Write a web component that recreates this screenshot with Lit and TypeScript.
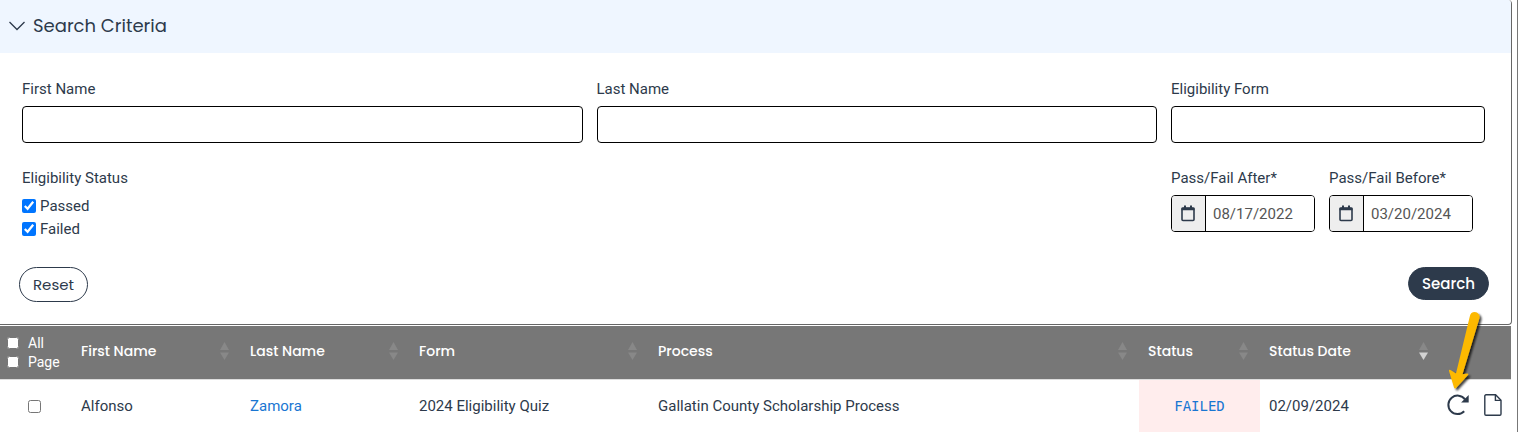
import { LitElement, html, css, svg, nothing } from "lit";
import { customElement, state } from "lit/decorators.js";

interface Column {
  label: string;
  cls: string;
  sorted?: boolean;
}

interface Applicant {
  first: string;
  last: string;
  form: string;
  process: string;
  status: string;
  date: string;
}

const COLUMNS: Column[] = [
  { label: "First Name", cls: "name" },
  { label: "Last Name", cls: "name" },
  { label: "Form", cls: "form" },
  { label: "Process", cls: "process" },
  { label: "Status", cls: "status" },
  { label: "Status Date", cls: "date", sorted: true },
];

const ROWS: Applicant[] = [
  {
    first: "Alfonso",
    last: "Zamora",
    form: "2024 Eligibility Quiz",
    process: "Gallatin County Scholarship Process",
    status: "FAILED",
    date: "02/09/2024",
  },
];

@customElement("app-root")
export class AppRoot extends LitElement {
  @state() private open = true;

  static styles = css`
    :host {
      display: block;
      background: #fff;
      color: #2d3a4b;
      font-family: Roboto, "Liberation Sans", sans-serif;
      font-size: 15px;
      line-height: 20px;
    }
    *, *::before, *::after { box-sizing: border-box; }
    button, input { font: inherit; color: inherit; }
    svg { display: block; }

    .frame {
      position: relative;
      margin-right: 9px;
      padding-right: 5px;
      border-right: 1px solid #777;
      min-height: 100vh;
    }
    .panel {
      border: 1px solid #666;
      border-width: 0 1px 1px 0;
      border-radius: 0 4px 4px 0;
      margin-bottom: 1px;
      overflow: hidden;
    }
    .heading {
      display: flex;
      align-items: center;
      gap: 8px;
      width: 100%;
      height: 53px;
      padding: 0 9px 2px;
      border: 0;
      background: #eff6ff;
      font-family: Poppins, "Open Sans", sans-serif;
      font-size: 18px;
      text-align: left;
    }
    .criteria { padding: 26px 22px 22px 19px; }
    .fields {
      display: grid;
      grid-template-columns: minmax(0, 1fr) minmax(0, 1fr) 314px;
      gap: 25px 14px;
      padding: 0 4px 0 3px;
    }
    .field {
      display: flex;
      flex-direction: column;
      gap: 7px;
    }
    .box {
      width: 100%;
      height: 37px;
      padding: 0 7px;
      border: 1px solid #000;
      border-radius: 4px;
      background: #fff;
    }
    .checks {
      grid-column: span 2;
      margin: 0;
      padding: 0;
      border: 0;
    }
    .checks legend { padding: 0; margin-bottom: 6px; }
    .check {
      display: flex;
      align-items: center;
      gap: 4px;
      height: 23px;
    }
    .check input { width: 14px; height: 14px; margin: 0; accent-color: #0075ff; }
    .dates { display: flex; gap: 14px; }
    .dates .field { width: 144px; }
    .date-box {
      display: flex;
      height: 37px;
      border: 1px solid #000;
      border-radius: 4px;
      overflow: hidden;
    }
    .addon {
      flex: none;
      display: grid;
      place-items: center;
      width: 34px;
      padding: 0 2px 0 0;
      border: 0;
      border-right: 1px solid #000;
      background: #eee;
    }
    .date-box input {
      flex: 1;
      min-width: 0;
      padding: 0 7px;
      border: 0;
      color: #555;
    }
    .actions {
      display: flex;
      justify-content: space-between;
      align-items: flex-start;
      margin-top: 27px;
    }
    .pill {
      height: 35px;
      padding: 0 13px;
      border: 1px solid #2d3a4b;
      border-radius: 18px;
      background: #fff;
      font-family: Poppins, "Open Sans", sans-serif;
      font-size: 15px;
    }
    .pill.primary {
      height: 33px;
      background: #2d3a4b;
      color: #fff;
      font-weight: 500;
    }

    table {
      width: calc(100% - 1px);
      border-collapse: separate;
      border-spacing: 0;
      table-layout: fixed;
    }
    th, td {
      padding: 0 9px;
      text-align: left;
      font-weight: 400;
      white-space: nowrap;
    }
    th {
      height: 54px;
      padding-bottom: 3px;
      background: #777;
      color: #fff;
      border-bottom: 1px solid #ddd;
      font-family: Poppins, "Open Sans", sans-serif;
      font-size: 14px;
      font-weight: 500;
    }
    td { height: 52px; }
    .select { width: 72px; }
    .name { width: 169px; }
    .form { width: 239px; }
    .status { width: 121px; }
    .date { width: 180px; }
    .tools { width: 71px; }
    th.select { padding: 0 7px 1px; font-family: Roboto, sans-serif; font-weight: 400; }
    .select label {
      display: flex;
      align-items: center;
      gap: 9px;
      height: 19px;
    }
    .select input { width: 12px; height: 12px; margin: 0; }
    td.select input { width: 13px; height: 13px; margin: 0 auto; display: block; }
    td.select { padding: 0 11px 0 8px; }
    .sort {
      display: flex;
      align-items: center;
      justify-content: space-between;
      width: 100%;
      padding: 0 3px 0 0;
      border: 0;
      background: none;
      text-align: left;
    }
    a { color: #1976d2; text-decoration: none; }
    td.status {
      background: #ffeded;
      text-align: center;
    }
    td.status a {
      font-family: "DejaVu Sans Mono", monospace;
      font-size: 14px;
    }
    td.tools { padding: 0 9px 2px 7px; }
    .icons {
      display: flex;
      align-items: center;
      justify-content: space-between;
    }
    .icons button { padding: 0; border: 0; background: none; }
    .pointer {
      position: absolute;
      right: 32px;
      top: 309px;
      pointer-events: none;
    }
  `;

  private calendar() {
    return svg`<svg width="14" height="17" viewBox="0 0 14 17" fill="none" stroke="#2d3a4b">
      <rect x="1" y="3" width="12" height="12.5" rx="1" stroke-width="1.6"/>
      <path d="M.5 4h13" stroke-width="2.6"/><path d="M4 .5v3M10 .5v3" stroke-width="2"/>
    </svg>`;
  }

  private dateField(id: string, label: string, value: string) {
    return html`<div class="field">
      <label for=${id}>${label}</label>
      <div class="date-box">
        <button class="addon" type="button" aria-label="Open calendar">${this.calendar()}</button>
        <input id=${id} type="text" .value=${value} />
      </div>
    </div>`;
  }

  private textField(id: string, label: string) {
    return html`<div class="field">
      <label for=${id}>${label}</label>
      <input class="box" id=${id} type="text" />
    </div>`;
  }

  private row(r: Applicant) {
    return html`<tr>
      <td class="select"><input type="checkbox" aria-label="Select applicant" /></td>
      <td>${r.first}</td>
      <td><a href="#">${r.last}</a></td>
      <td>${r.form}</td>
      <td>${r.process}</td>
      <td class="status"><a href="#">${r.status}</a></td>
      <td>${r.date}</td>
      <td class="tools">
        <div class="icons">
          <button type="button" aria-label="Reprocess">
            <svg width="22" height="22" viewBox="0 0 22 22" fill="none">
              <path d="M17.2 17.2A9.2 9.2 0 1 1 18 5.4" stroke="#2d3a4b" stroke-width="2"/>
              <path d="M21.7 1v7.6h-7.6z" fill="#2d3a4b"/>
            </svg>
          </button>
          <button type="button" aria-label="Open document">
            <svg width="18" height="22" viewBox="0 0 18 22" fill="none" stroke="#2d3a4b" stroke-width="1.4">
              <path d="M2 .8h9.6l5.4 5.4V20a1.2 1.2 0 0 1-1.2 1.2H2A1.2 1.2 0 0 1 .8 20V2A1.2 1.2 0 0 1 2 .8z"/>
              <path d="M11.4 1v5.4H17"/>
            </svg>
          </button>
        </div>
      </td>
    </tr>`;
  }

  render() {
    return html`<div class="frame">
      <section class="panel">
        <button class="heading" type="button" aria-expanded=${this.open} @click=${() => (this.open = !this.open)}>
          <svg width="16" height="10" viewBox="0 0 16 10" fill="none" stroke="#2d3a4b" stroke-width="1.3">
            <path d="M.5 1 8 8.5 15.5 1"/>
          </svg>
          <span>Search Criteria</span>
        </button>
        ${this.open
          ? html`<form class="criteria" @submit=${(e: Event) => e.preventDefault()}>
              <div class="fields">
                ${this.textField("first", "First Name")}
                ${this.textField("last", "Last Name")}
                ${this.textField("form", "Eligibility Form")}
                <fieldset class="checks">
                  <legend>Eligibility Status</legend>
                  <label class="check"><input type="checkbox" checked />Passed</label>
                  <label class="check"><input type="checkbox" checked />Failed</label>
                </fieldset>
                <div class="dates">
                  ${this.dateField("after", "Pass/Fail After*", "08/17/2022")}
                  ${this.dateField("before", "Pass/Fail Before*", "03/20/2024")}
                </div>
              </div>
              <div class="actions">
                <button class="pill" type="reset">Reset</button>
                <button class="pill primary" type="submit">Search</button>
              </div>
            </form>`
          : nothing}
      </section>
      <table>
        <thead>
          <tr>
            <th class="select">
              <label><input type="checkbox" />All</label>
              <label><input type="checkbox" />Page</label>
            </th>
            ${COLUMNS.map(
              (c) => html`<th class=${c.cls}>
                <button class="sort" type="button">
                  ${c.label}
                  <svg width="9" height="18" viewBox="0 0 9 18" fill="#888">
                    <path d="M4.5 0 9 8H0z"/>
                    <path d="M0 10.500h9L4.500 18z" fill=${c.sorted ? "#d2d2d2" : "#888"}/>
                  </svg>
                </button>
              </th>`
            )}
            <th class="tools"></th>
          </tr>
        </thead>
        <tbody>${ROWS.map((r) => this.row(r))}</tbody>
      </table>
      <svg class="pointer" width="40" height="84" viewBox="0 0 40 84">
        <defs>
          <filter id="shade" x="-30%" y="-20%" width="170%" height="150%">
            <feDropShadow dx="2" dy="2" stdDeviation="1.3" flood-color="#000" flood-opacity=".75"/>
          </filter>
        </defs>
        <path filter="url(#shade)" fill="#fdb900"
          d="M29.700 3a5 5 0 0 1 4.700 6.300L17.500 65.200 22.500 64.500Q24 64.500 23 66L10.800 79.200Q9.500 80 9 78.500L4 62Q3.700 60 5.500 61L11 64.500 24.900 7a5 5 0 0 1 4.800-4z"/>
      </svg>
    </div>`;
  }
}
